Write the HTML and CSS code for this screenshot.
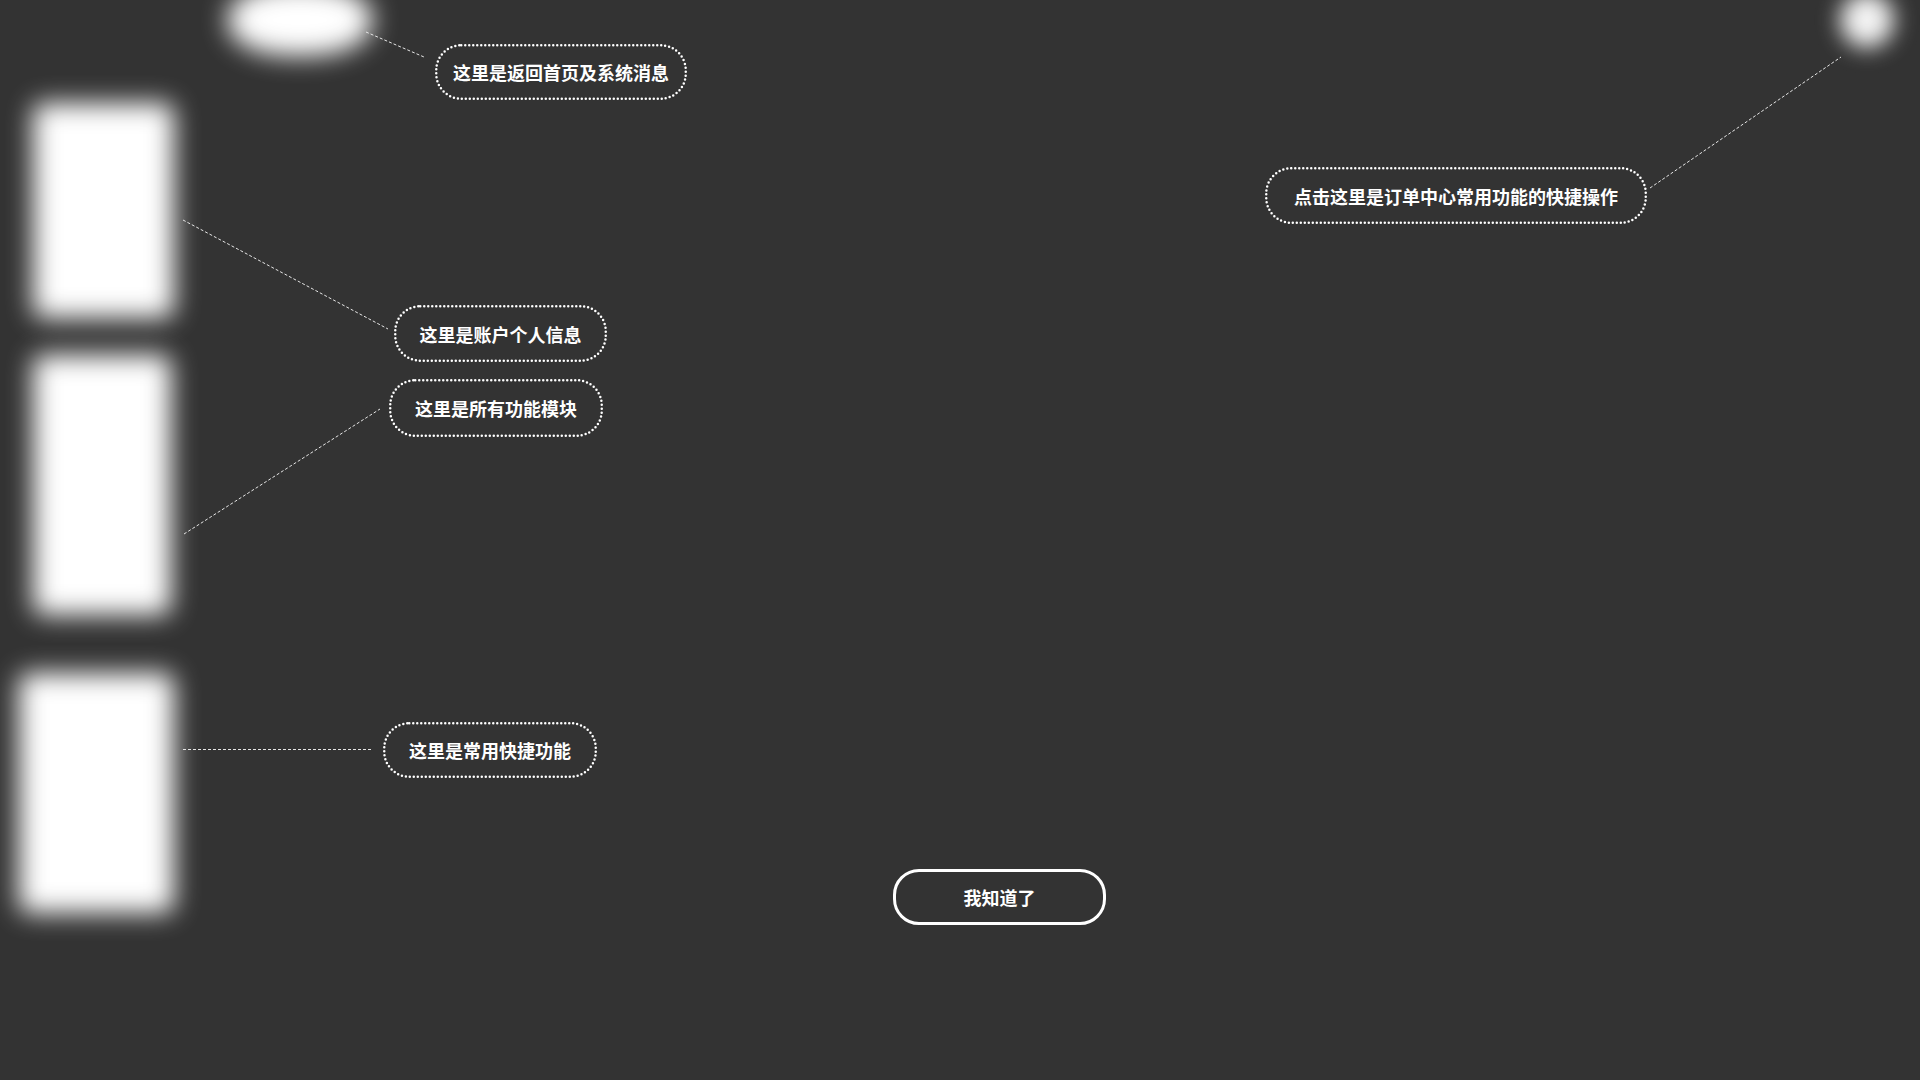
FILE: index.html
```html
<!DOCTYPE html>
<html lang="zh-CN">
<head>
<meta charset="utf-8">
<title>新手引导</title>
<link rel="stylesheet" href="styles.css">
</head>
<body>
<div class="stage">
  <div class="spot spot-home"></div>
  <div class="spot spot-user"></div>
  <div class="spot spot-account"></div>
  <div class="spot spot-modules"></div>
  <div class="spot spot-quick"></div>

  <svg class="links" width="1920" height="1080" viewBox="0 0 1920 1080">
    <line x1="366" y1="32" x2="424" y2="57"/>
    <line x1="1650" y1="188" x2="1841" y2="57"/>
    <line x1="183" y1="220" x2="388" y2="329"/>
    <line x1="184" y1="534" x2="380" y2="409"/>
    <line x1="183" y1="749.5" x2="372" y2="749.5"/>
  </svg>

  <div class="tip tip-home"><svg class="dots"><rect/></svg><span>这里是返回首页及系统消息</span></div>
  <div class="tip tip-order"><svg class="dots"><rect/></svg><span>点击这里是订单中心常用功能的快捷操作</span></div>
  <div class="tip tip-account"><svg class="dots"><rect/></svg><span>这里是账户个人信息</span></div>
  <div class="tip tip-modules"><svg class="dots"><rect/></svg><span>这里是所有功能模块</span></div>
  <div class="tip tip-quick"><svg class="dots"><rect/></svg><span>这里是常用快捷功能</span></div>

  <button class="ok">我知道了</button>
</div>
</body>
</html>
```

FILE: styles.css
```css
html, body {
  margin: 0;
  padding: 0;
  background: #333333;
}

.stage {
  position: relative;
  width: 1920px;
  height: 1080px;
  overflow: hidden;
  background: #333333;
  font-family: "Noto Sans CJK SC", "Noto Sans", sans-serif;
}

.spot {
  position: absolute;
  background: #ffffff;
  filter: blur(13px);
}

.spot-home {
  left: 228px;
  top: -16px;
  width: 144px;
  height: 72px;
  border-radius: 45%;
}

.spot-user {
  left: 1840px;
  top: -8px;
  width: 54px;
  height: 56px;
  border-radius: 50%;
  background: #f4f4f4;
  filter: blur(11px);
}

.spot-account {
  left: 33px;
  top: 103px;
  width: 141px;
  height: 215px;
  border-radius: 10px;
}

.spot-modules {
  left: 33px;
  top: 355px;
  width: 138px;
  height: 260px;
  border-radius: 10px;
}

.spot-quick {
  left: 19px;
  top: 673px;
  width: 155px;
  height: 240px;
  border-radius: 10px;
}

.links {
  position: absolute;
  left: 0;
  top: 0;
}

.links line {
  stroke: #e6e6e6;
  stroke-width: 1;
  stroke-dasharray: 3 2;
}

.tip {
  position: absolute;
  box-sizing: border-box;
  height: 56px;
  display: flex;
  align-items: center;
  justify-content: center;
  color: #ffffff;
  font-size: 18px;
  font-weight: 700;
  line-height: 1;
  white-space: nowrap;
}

.tip span {
  position: relative;
}

.dots {
  position: absolute;
  left: 0;
  top: 0;
  width: 100%;
  height: 100%;
  overflow: visible;
}

.dots rect {
  x: 1.25px;
  y: 1.25px;
  width: calc(100% - 2.5px);
  height: calc(100% - 2.5px);
  rx: 25px;
  ry: 25px;
  fill: none;
  stroke: #ffffff;
  stroke-width: 2.5;
  stroke-dasharray: 0 4;
  stroke-linecap: round;
}

.tip-home { left: 435px; top: 44px; width: 252px; }
.tip-order { left: 1265px; top: 167px; width: 382px; height: 57px; }
.tip-account { left: 394px; top: 305px; width: 213px; height: 57px; }
.tip-modules { left: 389px; top: 379px; width: 214px; height: 58px; }
.tip-quick { left: 383px; top: 722px; width: 214px; }

.ok {
  position: absolute;
  left: 893px;
  top: 869px;
  width: 213px;
  height: 56px;
  box-sizing: border-box;
  padding: 0;
  background: transparent;
  border: 3px solid #ffffff;
  border-radius: 26px;
  color: #ffffff;
  font-family: "Noto Sans CJK SC", "Noto Sans", sans-serif;
  font-size: 18px;
  font-weight: 700;
  line-height: 1;
  cursor: pointer;
}
```
